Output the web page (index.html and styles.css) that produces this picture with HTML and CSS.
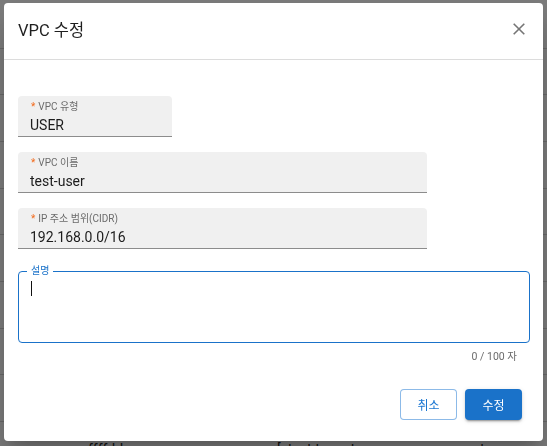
FILE: index.html
```html
<!DOCTYPE html>
<html lang="ko">
<head>
<meta charset="utf-8">
<title>VPC 수정</title>
<link rel="stylesheet" href="styles.css">
</head>
<body>
<div class="page">
  <div class="row"></div>
  <div class="row"></div>
  <div class="row"></div>
  <div class="row"></div>
  <div class="row"></div>
  <div class="row"></div>
  <div class="row"></div>
  <div class="row"></div>
  <div class="row"></div>
  <div class="row data">
    <span class="cell c1">ffffdd</span>
    <span class="cell c2">[xtest-tenant</span>
    <span class="cell c3">system-vpc</span>
  </div>
</div>
<div class="overlay"></div>
<div class="dialog" role="dialog">
  <div class="dialog-header">
    <h2 class="dialog-title">VPC 수정</h2>
    <button class="close" aria-label="닫기">
      <svg width="12" height="12" viewBox="0 0 12 12"><path d="M0.7 0.7 L11.3 11.3 M11.3 0.7 L0.7 11.3" stroke="#757575" stroke-width="1.6" fill="none"/></svg>
    </button>
  </div>
  <div class="dialog-body">
    <div class="field short">
      <div class="label"><span class="req">*</span>VPC 유형</div>
      <div class="value">USER</div>
    </div>
    <div class="field wide">
      <div class="label"><span class="req">*</span>VPC 이름</div>
      <div class="value">test-user</div>
    </div>
    <div class="field wide">
      <div class="label"><span class="req">*</span>IP 주소 범위(CIDR)</div>
      <div class="value">192.168.0.0/16</div>
    </div>
    <div class="textarea">
      <span class="ta-label">설명</span>
      <span class="caret"></span>
    </div>
    <div class="counter">0 / 100 자</div>
  </div>
  <div class="dialog-footer">
    <button class="btn outlined">취소</button>
    <button class="btn contained">수정</button>
  </div>
</div>
</body>
</html>
```
FILE: styles.css
```css
* { box-sizing: border-box; }
html, body { margin: 0; padding: 0; }
body {
  font-family: Roboto, "Noto Sans CJK KR", sans-serif;
  background: #ffffff;
  width: 547px;
  height: 446px;
  overflow: hidden;
}
.page { width: 547px; height: 446px; overflow: hidden; }
.row {
  height: 46.7px;
  border-bottom: 1px solid #d6d6d6;
}
.row:first-child { height: 48.5px; }
.row.data {
  display: grid;
  grid-template-columns: 189px 182px auto;
  padding-left: 88px;
  padding-top: 19px;
  font-size: 14px;
  color: #222;
  border-bottom: none;
}
.overlay {
  position: fixed;
  inset: 0;
  background: rgba(0, 0, 0, 0.52);
}
.dialog {
  position: fixed;
  left: 4px;
  top: 3px;
  width: 539px;
  height: 438px;
  background: #fff;
  border-radius: 4px;
  display: flex;
  flex-direction: column;
  box-shadow: 0 11px 15px -7px rgba(0,0,0,0.2), 0 24px 38px 3px rgba(0,0,0,0.14);
}
.dialog-header {
  height: 57px;
  border-bottom: 1px solid #dcdcdc;
  display: flex;
  align-items: center;
  justify-content: space-between;
  padding: 0 18px 4px 14px;
}
.dialog-title {
  margin: 0;
  font-size: 16.5px;
  font-weight: 400;
  color: #1f1f1f;
}
.close {
  border: 0;
  background: none;
  padding: 0;
  width: 12px;
  height: 12px;
  display: flex;
  cursor: pointer;
}
.dialog-body {
  padding: 36px 14px 0 14px;
  display: flex;
  flex-direction: column;
  align-items: flex-start;
}
.field {
  height: 41px;
  background: #f0f0f0;
  border-radius: 4px 4px 0 0;
  border-bottom: 1px solid #8c8c8c;
  padding: 5px 12px 0 12px;
  margin-bottom: 15px;
}
.field.short { width: 154px; }
.field.wide { width: 409px; }
.label {
  font-size: 10px;
  line-height: 12px;
  color: #6b6b6b;
  display: flex;
  align-items: flex-start;
}
.req {
  color: #f26b1d;
  font-size: 10px;
  margin-right: 3px;
  margin-left: 1px;
}
.value {
  font-size: 14px;
  line-height: 20px;
  color: #1c1c1c;
  margin-top: 2px;
}
.textarea {
  position: relative;
  width: 512px;
  height: 72px;
  margin-top: 7px;
  border: 1.5px solid #1a72c9;
  border-radius: 4px;
  padding: 9px 12px;
}
.ta-label {
  position: absolute;
  left: 8px;
  top: -8px;
  padding: 0 4px;
  background: #fff;
  font-size: 10px;
  line-height: 13px;
  color: #1a72c9;
}
.caret {
  display: block;
  width: 1px;
  height: 15px;
  background: #111;
}
.counter {
  align-self: flex-end;
  margin-top: 5px;
  margin-right: 12px;
  font-size: 10.5px;
  color: #6b6b6b;
}
.dialog-footer {
  margin-top: auto;
  display: flex;
  justify-content: flex-end;
  gap: 8px;
  padding: 0 21px 21px 0;
}
.btn {
  width: 57px;
  height: 31px;
  border-radius: 4px;
  font-family: Roboto, "Noto Sans CJK KR", sans-serif;
  font-size: 12px;
  cursor: pointer;
}
.btn.outlined {
  background: #fff;
  border: 1px solid rgba(25, 118, 210, 0.5);
  color: #1976d2;
}
.btn.contained {
  background: #1a72c9;
  border: 0;
  color: #fff;
  box-shadow: 0 3px 1px -2px rgba(0,0,0,0.2), 0 2px 2px 0 rgba(0,0,0,0.14), 0 1px 5px 0 rgba(0,0,0,0.12);
}
```
